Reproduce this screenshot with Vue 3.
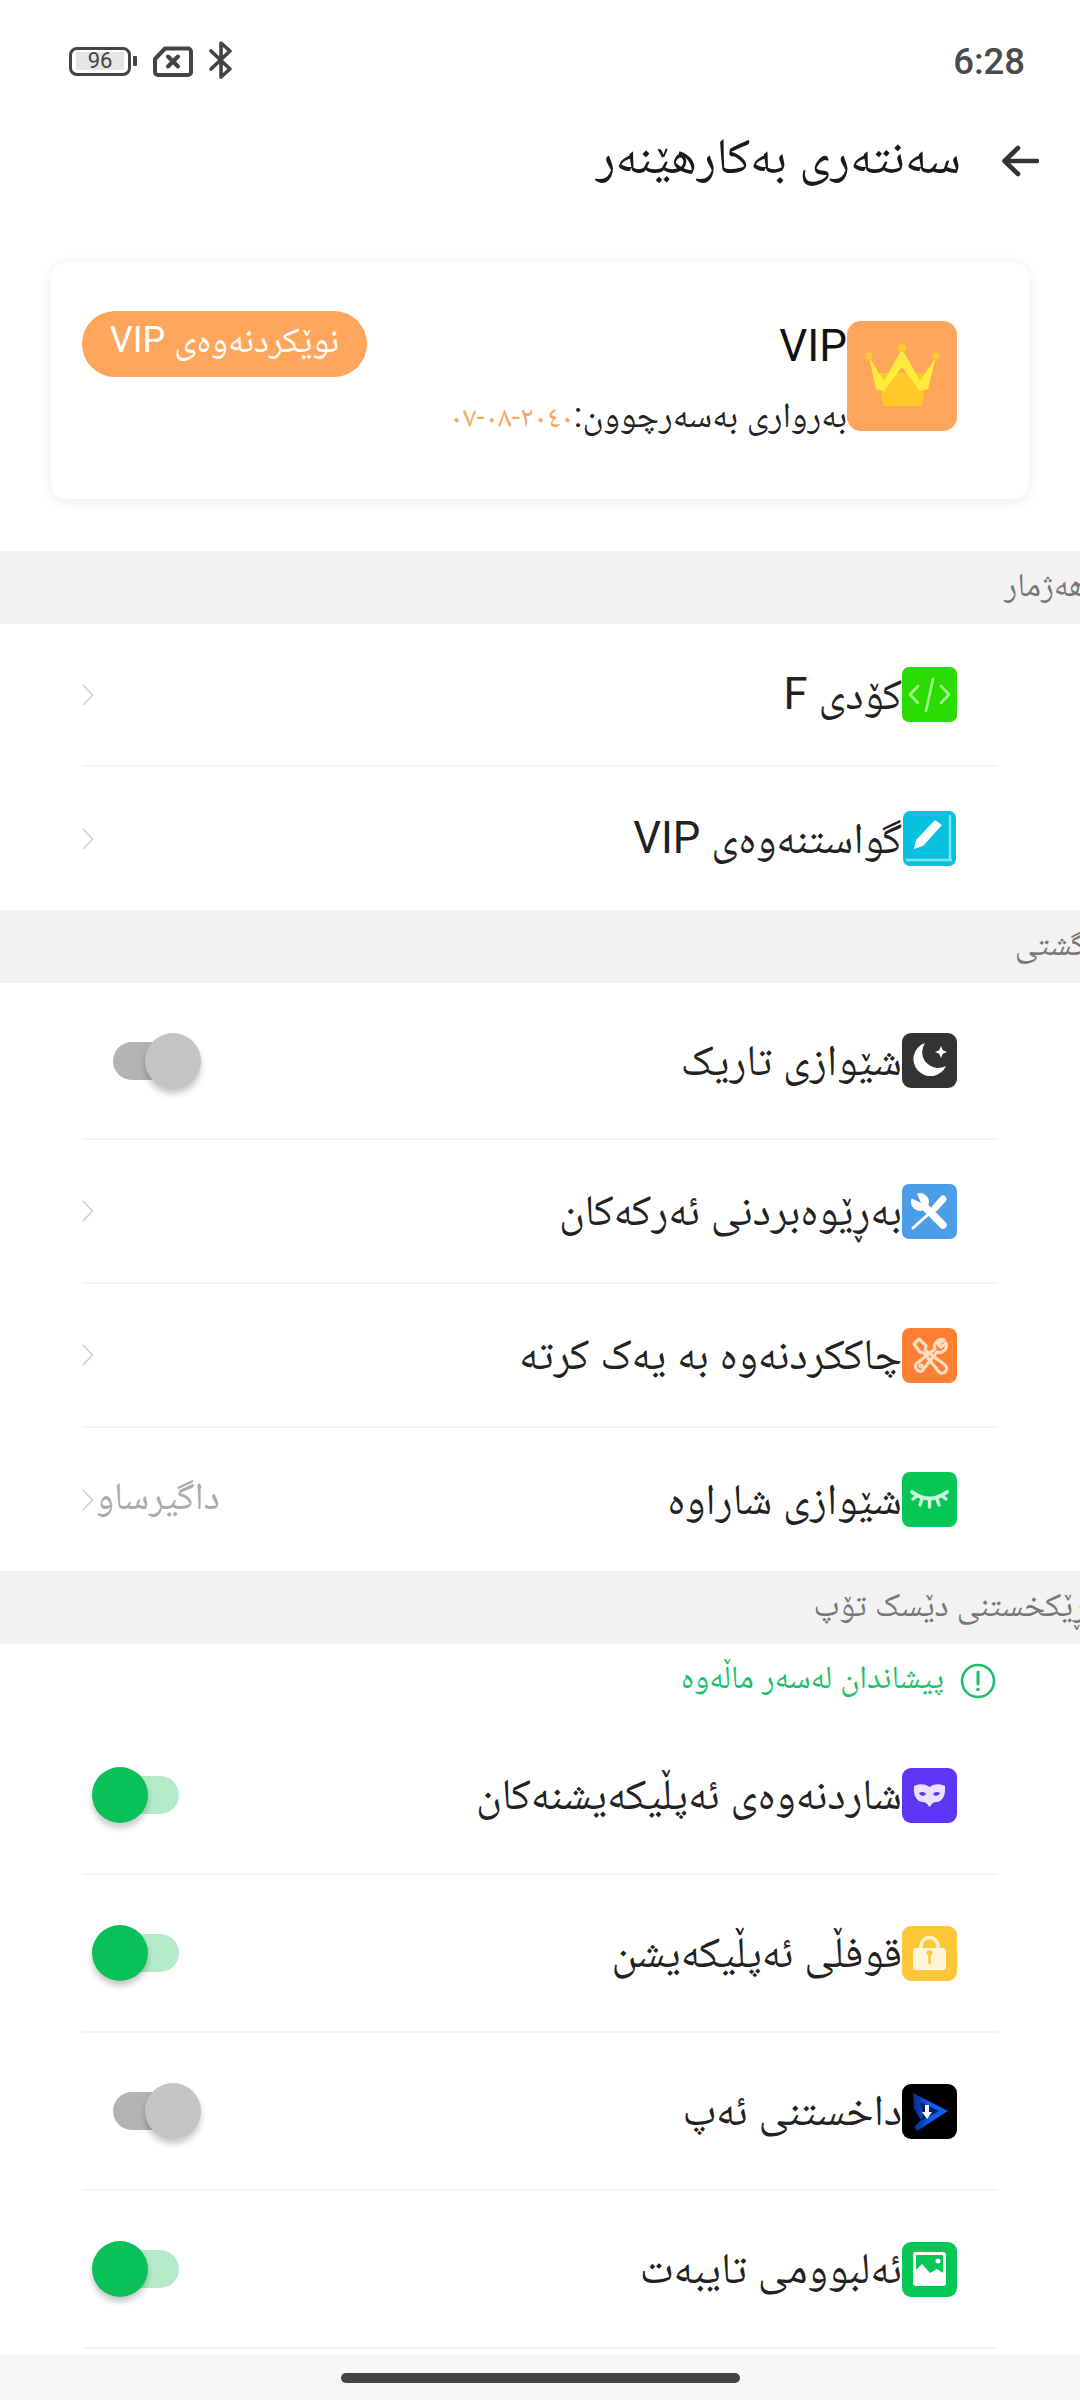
<script setup>
const accountRows = [
  { icon: 'code', label: 'کۆدی F', chevron: true },
  { icon: 'book', label: 'گواستنەوەی VIP', chevron: true }
]
const generalRows = [
  { icon: 'moon', label: 'شێوازی تاریک', toggle: 'off', tall: true },
  { icon: 'tools', label: 'بەڕێوەبردنی ئەرکەکان', chevron: true },
  { icon: 'repair', label: 'چاککردنەوە بە یەک کرتە', chevron: true },
  { icon: 'eye', label: 'شێوازی شاراوە', value: 'داگیرساو', chevron: true }
]
const desktopRows = [
  { icon: 'mask', label: 'شاردنەوەی ئەپڵیکەیشنەکان', toggle: 'on' },
  { icon: 'lock', label: 'قوفڵی ئەپڵیکەیشن', toggle: 'on' },
  { icon: 'play', label: 'داخستنی ئەپ', toggle: 'off' },
  { icon: 'photo', label: 'ئەلبوومی تایبەت', toggle: 'on' }
]
const sections = [
  { title: 'هەژمار', cls: 'list-a', rows: accountRows },
  { title: 'گشتی', cls: 'list-b', rows: generalRows },
  { title: 'ڕێکخستنی دێسک تۆپ', cls: 'list-c', rows: desktopRows, notice: 'پیشاندان لەسەر ماڵەوە' }
]
</script>

<template>
  <div class="page">
    <div class="status">
      <div class="battery">
        <div class="batt-body"><span class="batt-fill">96</span></div>
        <div class="batt-tip"></div>
      </div>
      <svg class="sim" width="40" height="31" viewBox="0 0 40 31">
        <path d="M12 2.500H35a3 3 0 0 1 3 3V26a3 3 0 0 1-3 3H5a3 3 0 0 1-3-3V13z" fill="none" stroke="#444" stroke-width="4" stroke-linejoin="round"/>
        <path d="M15 10.500l10 10M25 10.500l-10 10" stroke="#444" stroke-width="4" stroke-linecap="round"/>
      </svg>
      <svg class="bt" width="24" height="38" viewBox="0 0 24 38">
        <path d="M2 10l19 18-9 8V2l9 8L2 28" fill="none" stroke="#444" stroke-width="3.600" stroke-linejoin="round" stroke-linecap="round"/>
      </svg>
      <span class="time">6:28</span>
    </div>

    <header class="head">
      <svg class="back" width="38" height="32" viewBox="0 0 38 32">
        <path d="M36 16H4M17 3L3.500 16 17 29" fill="none" stroke="#333" stroke-width="4.600" stroke-linecap="round" stroke-linejoin="round"/>
      </svg>
      <h1 class="title">سەنتەری بەکارهێنەر</h1>
    </header>

    <section class="card">
      <div class="vip-icon">
        <svg width="110" height="110" viewBox="0 0 110 110">
          <path d="M31 52H79L75 85H36z" fill="#ffca28"/>
          <path d="M22 36L37 60 55 28 73 60 89 36 81 68 73 70 55 46 37 70 29 68z" fill="#ffeb3b"/>
          <circle cx="55" cy="27" r="4" fill="#ffca28"/>
          <circle cx="22" cy="35" r="3.500" fill="#ffca28"/>
          <circle cx="89" cy="35" r="3.500" fill="#ffca28"/>
        </svg>
      </div>
      <div class="vip-text">
        <div class="vip-name">VIP</div>
        <div class="vip-date">بەرواری بەسەرچوون:<span class="date-val">٢٠٤٠-٠٨-٠٧</span></div>
      </div>
      <button class="renew">نوێکردنەوەی VIP</button>
    </section>

    <template v-for="sec in sections" :key="sec.title">
      <div class="sec-head"><span>{{ sec.title }}</span></div>
      <div v-if="sec.notice" class="notice">
        <svg width="36" height="36" viewBox="0 0 36 36">
          <circle cx="18" cy="18" r="16" fill="none" stroke="#1dbf6b" stroke-width="2.600"/>
          <path d="M18 9v12" stroke="#1dbf6b" stroke-width="3" stroke-linecap="round"/>
          <circle cx="18" cy="26.500" r="1.800" fill="#1dbf6b"/>
        </svg>
        <span>{{ sec.notice }}</span>
      </div>
      <div class="list" :class="sec.cls">
        <div v-for="row in sec.rows" :key="row.label" class="row" :class="{ tall: row.tall }">
          <svg class="ic" width="55" height="55" viewBox="0 0 55 55">
            <template v-if="row.icon === 'code'">
              <rect width="55" height="55" rx="7" fill="#2bdc00"/>
              <path d="M16 19l-8 8.500 8 8.500M39 19l8 8.500-8 8.500M31 12l-7 32" fill="none" stroke="#a5f592" stroke-width="2.600" stroke-linecap="round" stroke-linejoin="round"/>
            </template>
            <template v-else-if="row.icon === 'book'">
              <rect x="1" width="53" height="55" rx="7" fill="#08c1e0"/>
              <path d="M4 49h46M48 4v45" stroke="#7fe4f3" stroke-width="2.400" fill="none"/>
              <path d="M33 9l7 5-19 21-9 3 2-9z" fill="#fff"/>
            </template>
            <template v-else-if="row.icon === 'moon'">
              <rect width="55" height="55" rx="9" fill="#333"/>
              <path d="M23 10A17 17 0 1 0 44 33 16 16 0 0 1 23 10z" fill="#fff"/>
              <path d="M39 13l1.800 4.200L45 19l-4.200 1.800L39 25l-1.800-4.200L33 19l4.200-1.800z" fill="#fff"/>
            </template>
            <template v-else-if="row.icon === 'tools'">
              <rect width="55" height="55" rx="7" fill="#4a9ee8"/>
              <path d="M20 20l21 21" stroke="#fff" stroke-width="7.500" stroke-linecap="round"/>
              <circle cx="18" cy="18" r="9" fill="#fff"/>
              <path d="M19 19L7 13 13 5z" fill="#4a9ee8"/>
              <path d="M41 15l-8 9" stroke="#fff" stroke-width="7" stroke-linecap="round"/>
              <path d="M30 27L11 44" stroke="#fff" stroke-width="3" stroke-linecap="round"/>
            </template>
            <template v-else-if="row.icon === 'repair'">
              <rect width="55" height="55" rx="8" fill="#ff7f33"/>
              <g fill="none" stroke="#ffdcc2" stroke-width="3.200" stroke-linejoin="round">
                <path d="M12 16l5-5 7 7-1 4 20 15a4.500 4.500 0 0 1-6 7L22 25l-4-1z"/>
                <path d="M42 12a7 7 0 0 0-9 9L14 36a5 5 0 0 0 6 7l15-19a7 7 0 0 0 9-9l-5 4-3-3z"/>
              </g>
              <circle cx="19" cy="38" r="2.500" fill="#ffdcc2"/>
            </template>
            <template v-else-if="row.icon === 'eye'">
              <rect width="55" height="55" rx="8" fill="#06c755"/>
              <path d="M10 20q17.500 13 35 0" fill="none" stroke="#c8f7da" stroke-width="4" stroke-linecap="round"/>
              <path d="M11 27l4-3M44 27l-4-3M18 33l2-6M37 33l-2-6M27.500 35v-7" fill="none" stroke="#c8f7da" stroke-width="3.400" stroke-linecap="round"/>
            </template>
            <template v-else-if="row.icon === 'mask'">
              <rect width="55" height="55" rx="9" fill="#5c35f5"/>
              <path d="M12 18c6-3 12-2 15.500 1 3.500-3 9.500-4 15.500-1 1 10-3 16-9 16-3 0-5 3-6.500 5-1.500-2-3.500-5-6.500-5-6 0-10-6-9-16z" fill="#e9e2ff"/>
              <path d="M17 25c3-2 6-1 7 1-2 3-6 2-7-1zM38 25c-3-2-6-1-7 1 2 3 6 2 7-1z" fill="#5c35f5"/>
            </template>
            <template v-else-if="row.icon === 'lock'">
              <rect width="55" height="55" rx="9" fill="#ffc63a"/>
              <path d="M19 24v-4a8.500 8.500 0 0 1 17 0v4" fill="none" stroke="#fff1c8" stroke-width="3.600"/>
              <rect x="11" y="22" width="33" height="22" rx="3" fill="#fff6da"/>
              <circle cx="27.500" cy="27" r="2.800" fill="#ffc63a"/>
              <rect x="26.200" y="28" width="2.600" height="10" fill="#ffc63a"/>
            </template>
            <template v-else-if="row.icon === 'play'">
              <defs>
                <linearGradient id="playBlue" x1="0" x2="1" y1="0" y2="0">
                  <stop offset="0" stop-color="#052a8a"/>
                  <stop offset=".45" stop-color="#0b5be8"/>
                  <stop offset="1" stop-color="#0e62f0"/>
                </linearGradient>
              </defs>
              <rect width="55" height="55" rx="9" fill="#000"/>
              <path d="M11 9L46 27 15 47 12 43 19 36 12 25z" fill="url(#playBlue)"/>
              <path d="M18 18L21 30 19 37 37 27z" fill="#041c66"/>
              <path d="M23 21h4v7h3l-5 7-5-7h3z" fill="#fff"/>
            </template>
            <template v-else>
              <rect width="55" height="55" rx="9" fill="#06c755"/>
              <rect x="11" y="10" width="33" height="34" rx="3" fill="#fff"/>
              <path d="M14 28l6-6 8 9 7-4 6 4V14a1 1 0 0 0-1-1H15a1 1 0 0 0-1 1z" fill="#06c755"/>
              <circle cx="36" cy="19" r="2.500" fill="#fff"/>
            </template>
          </svg>
          <span class="label">{{ row.label }}</span>
          <div class="trail">
            <template v-if="row.chevron">
              <svg class="chev" width="12" height="22" viewBox="0 0 12 22">
                <path d="M1 1l9.500 10L1 21" fill="none" stroke="#cfcfcf" stroke-width="1.500"/>
              </svg>
              <span v-if="row.value" class="value">{{ row.value }}</span>
            </template>
            <div v-else class="switch" :class="row.toggle">
              <i class="track"></i>
              <i class="knob"></i>
            </div>
          </div>
        </div>
      </div>
    </template>

    <div class="navbar"><span class="pill"></span></div>
  </div>
</template>

<style>
html, body { margin: 0; background: #fff; }
</style>

<style scoped>
.page {
  position: relative;
  width: 1080px;
  height: 2400px;
  overflow: hidden;
  background: #fff;
  font-family: Roboto, "Noto Naskh Arabic", "DejaVu Sans", sans-serif;
  color: #222;
}
.status {
  display: flex;
  align-items: center;
  height: 122px;
  padding: 0 55px 0 69px;
  box-sizing: border-box;
  direction: ltr;
}
.battery { display: flex; align-items: center; gap: 2px; }
.batt-body {
  width: 62px;
  height: 29px;
  box-sizing: border-box;
  border: 3px solid #444;
  border-radius: 8px;
  display: flex;
  justify-content: center;
  align-items: center;
}
.batt-fill {
  width: 48px;
  height: 18px;
  background: #e6e6e6;
  font-size: 22px;
  line-height: 18px;
  text-align: center;
  color: #444;
}
.batt-tip { width: 4px; height: 10px; background: #444; border-radius: 1px; }
.sim { margin-left: 16px; }
.bt { margin-left: 16px; margin-top: -2px; }
.time { margin-left: auto; font-size: 36.500px; font-weight: 500; color: #4a4a4a; }
.head {
  direction: rtl;
  display: flex;
  align-items: center;
  height: 78px;
  padding-right: 41px;
}
.title {
  margin: -10px 40px 0 0;
  font-size: 50.500px;
  line-height: 60px;
  font-weight: 400;
  color: #1a1a1a;
}
.card {
  direction: rtl;
  display: flex;
  align-items: flex-start;
  margin: 62px 51px 52px;
  height: 237px;
  box-sizing: border-box;
  padding: 59px 72px 0 31px;
  background: #fff;
  border-radius: 16px;
  box-shadow: 0 2px 14px rgba(0, 0, 0, 0.08);
}
.vip-icon {
  width: 110px;
  height: 110px;
  border-radius: 14px;
  background: #ffa65c;
  flex: none;
}
.vip-icon svg { display: block; }
.vip-text { display: flex; flex-direction: column; }
.vip-name { font-size: 44px; line-height: 50px; color: #111; }
.vip-date { font-size: 35.500px; line-height: 44px; margin-top: 22px; color: #222; }
.date-val { color: #f2a860; font-size: 30px; }
.renew {
  margin: -10px auto 0 0;
  width: 285px;
  height: 66px;
  border: 0;
  border-radius: 33px;
  background: #ffa65c;
  color: #fff;
  font-family: inherit;
  font-size: 36px;
  padding: 0;
}
.sec-head {
  direction: rtl;
  display: flex;
  align-items: center;
  height: 73px;
  background: #f2f2f2;
  overflow: hidden;
}
.sec-head span {
  margin: -5px -6px 0 0;
  font-size: 33.500px;
  line-height: 40px;
  color: #777;
  white-space: nowrap;
}
.notice {
  direction: rtl;
  display: flex;
  align-items: center;
  gap: 16px;
  height: 73px;
  padding-right: 84px;
  font-size: 32.500px;
  color: #1dbf6b;
}
.list { direction: rtl; padding: 0 82px; }
.row {
  display: flex;
  align-items: center;
  padding-right: 41px;
  box-sizing: border-box;
  border-bottom: 2px solid #f4f4f4;
}
.list-a .row { height: 143px; }
.list-a .row:last-child, .list-b .row:last-child { border-bottom: 0; }
.list-b .row { height: 144px; }
.list-b .row.tall { height: 157px; }
.list-b .row:last-child { height: 143px; }
.list-c .row { height: 158px; }
.ic { flex: none; }
.label { font-size: 43.600px; line-height: 56px; color: #222; white-space: nowrap; }
.trail {
  margin-right: auto;
  display: flex;
  align-items: center;
  direction: ltr;
}
.chev { display: block; }
.value { font-size: 38.500px; line-height: 44px; color: #aaa; margin: -8px 0 0 2px; direction: rtl; }
.switch { position: relative; width: 125px; height: 58px; }
.switch i { position: absolute; display: block; }
.track { top: 10px; height: 38px; border-radius: 19px; }
.knob {
  width: 56px;
  height: 56px;
  top: 1px;
  border-radius: 50%;
  box-shadow: 0 5px 6px rgba(0, 0, 0, 0.22);
}
.on .track { left: 24px; width: 73px; background: #b5ebcb; }
.on .knob { left: 10px; background: #09c158; }
.off .track { left: 31px; width: 60px; background: #b3b3b3; }
.off .knob { left: 63px; background: #c4c4c4; }
.navbar {
  position: absolute;
  left: 0;
  right: 0;
  bottom: 0;
  height: 45px;
  background: #f7f7f7;
  display: flex;
  justify-content: center;
  padding-top: 18px;
  box-sizing: border-box;
}
.pill { width: 399px; height: 10px; border-radius: 5px; background: #444; }
</style>
